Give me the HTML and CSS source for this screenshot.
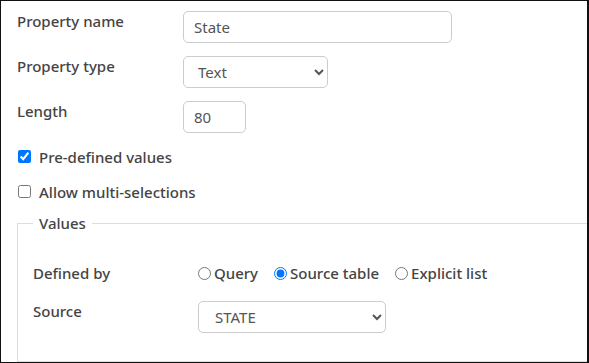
FILE: index.html
```html
<!DOCTYPE html>
<html lang="en">
<head>
  <meta charset="UTF-8">
  <title>Property</title>
  <link rel="stylesheet" href="styles.css">
</head>
<body>
  <div class="frame">
    <div class="form">

      <!-- Basic fields -->
      <div class="row">
        <label for="propName">Property name</label>
        <input type="text" id="propName" class="field name" value="State">
      </div>
      <div class="row">
        <label for="propType">Property type</label>
        <select id="propType" class="field type">
          <option>Text</option>
          <option>Number</option>
          <option>Date</option>
        </select>
      </div>
      <div class="row">
        <label for="propLength">Length</label>
        <input type="text" id="propLength" class="field length" value="80">
      </div>

      <!-- Options -->
      <div class="check">
        <input type="checkbox" id="predefined" checked>
        <label for="predefined">Pre-defined values</label>
      </div>
      <div class="check last">
        <input type="checkbox" id="multi">
        <label for="multi">Allow multi-selections</label>
      </div>

      <!-- Values -->
      <fieldset class="values">
        <legend>Values</legend>
        <div class="vrow">
          <span class="vlabel">Defined by</span>
          <div class="radios">
            <label class="radio"><input type="radio" name="defby">Query</label>
            <label class="radio"><input type="radio" name="defby" checked>Source table</label>
            <label class="radio"><input type="radio" name="defby">Explicit list</label>
          </div>
        </div>
        <div class="vrow source">
          <label class="vlabel" for="source">Source</label>
          <select id="source" class="field src">
            <option>STATE</option>
            <option>COUNTY</option>
          </select>
        </div>
      </fieldset>

    </div>
  </div>
</body>
</html>
```

FILE: styles.css
```css
body {
  margin: 0;
  font-family: "Noto Sans", "Open Sans", sans-serif;
  color: #444;
  background: #fff;
}
.frame {
  height: 363px;
  box-sizing: border-box;
  border: solid #111;
  border-width: 1px 2px 1px 1px;
  overflow: hidden;
}
.form {
  height: 100%;
  box-sizing: border-box;
  display: flex;
  flex-direction: column;
  padding: 10px 0 0 16px;
}
.row {
  display: flex;
  align-items: flex-start;
  margin-bottom: 13px;
}
.row label {
  width: 166px;
  font-size: 15px;
  font-weight: 500;
  line-height: 21px;
}
.field {
  box-sizing: border-box;
  height: 32px;
  border: 1px solid #ccc;
  border-radius: 5px;
  padding: 0 10px;
  font-family: inherit;
  font-size: 15px;
  color: #555;
  background: #fff;
}
.name { width: 269px; }
.type { width: 145px; padding-left: 10px; }
.length { width: 63px; }
.check {
  display: flex;
  align-items: center;
  height: 21px;
  margin-bottom: 14px;
  font-size: 15px;
  font-weight: 500;
}
.check.last {
  margin-bottom: 11px;
}
.check input {
  width: 13px;
  height: 13px;
  margin: 0 8px 0 1px;
}
.values {
  flex: 1;
  margin: 0 -40px 0 0;
  border: 1px solid #ddd;
  padding: 20px 16px 0 15px;
}
.values legend {
  padding: 0 6px;
  font-size: 15px;
  font-weight: 500;
}
.vrow {
  display: flex;
  align-items: center;
  margin-top: 10px;
}
.vlabel {
  width: 165px;
  font-size: 15px;
  font-weight: 500;
}
.radios {
  display: flex;
  gap: 16px;
}
.radio {
  display: flex;
  align-items: center;
  font-size: 15px;
  font-weight: 500;
}
.radio input {
  width: 13px;
  height: 13px;
  margin: 0 3px 0 0;
}
.vrow.source {
  align-items: flex-start;
  margin-top: 18px;
}
.src {
  width: 188px;
  padding-left: 12px;
}
```
